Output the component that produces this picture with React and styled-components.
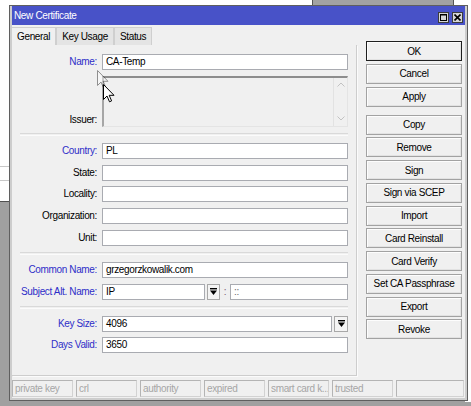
import React from 'react'
import styled, { createGlobalStyle } from 'styled-components'

const GlobalStyle = createGlobalStyle`
  html, body {
    margin: 0;
    padding: 0;
  }
  body {
    background: #a0a0a0;
    font-family: "Liberation Sans", Arial, sans-serif;
  }
`

const Desktop = styled.div`
  position: relative;
  width: 471px;
  height: 406px;
  overflow: hidden;
  background: #a0a0a0;
  font-family: "Liberation Sans", Arial, sans-serif;
  font-size: 10px;
  letter-spacing: -0.35px;
  color: #000;
`

// windows lying behind the dialog
const BackPane = styled.div`
  position: absolute;
  left: ${p => p.$x}px;
  top: ${p => p.$y}px;
  width: ${p => p.$w}px;
  height: ${p => p.$h}px;
  box-sizing: border-box;
  background: ${p => p.$bg};
  border: ${p => p.$border || 'none'};
  border-bottom: ${p => p.$bottom || p.$border || 'none'};
`

const Window = styled.div`
  position: absolute;
  left: 9px;
  top: 5px;
  width: 459px;
  height: 396px;
  box-sizing: border-box;
  border: 1px solid #5f5f5f;
  background: #cdcdcd;
  padding: 0 2px 2px;
  display: flex;
  flex-direction: column;
`

const TitleBar = styled.div`
  height: 19px;
  flex: 0 0 19px;
  display: flex;
  align-items: center;
  background: #4852c8;
  color: #fff;
  padding-left: 2px;
`

const TitleButtons = styled.div`
  margin-left: auto;
  align-self: flex-end;
  margin-bottom: 2px;
  padding-right: 2px;
  display: flex;
  gap: 3px;
`

const TitleButton = styled.div`
  width: 11px;
  height: 11px;
  box-sizing: border-box;
  border: 1px solid #3c3c3c;
  background: #d6d6d6;
  display: flex;
  align-items: center;
  justify-content: center;
`

const Body = styled.div`
  flex: 1;
  background: #f0f0f0;
  display: flex;
  flex-direction: column;
`

const MainRow = styled.div`
  flex: 1;
  display: flex;
`

const LeftCol = styled.div`
  width: 345px;
  display: flex;
  flex-direction: column;
`

const Tabs = styled.div`
  display: flex;
  margin-top: 2px;
  height: 18px;
`

const Tab = styled.div`
  padding: 0 5px;
  border: 1px solid #cfcfcf;
  border-bottom: none;
  border-left: ${p => (p.$first ? 'none' : '1px solid #cfcfcf')};
  background: ${p => (p.$active ? '#f0f0f0' : '#e4e4e4')};
  line-height: 17px;
  white-space: nowrap;
`

const Panel = styled.div`
  flex: 1;
  border-right: 1px solid #cdcdcd;
  border-bottom: 1px solid #cdcdcd;
  box-shadow: 1px 1px 0 #fbfbfb;
  padding: 9px 8px 0 0;
  display: flex;
  flex-direction: column;
  gap: 5.75px;
`

const Row = styled.div`
  display: grid;
  grid-template-columns: 85px 1fr;
  column-gap: 5px;
  align-items: ${p => (p.$bottom ? 'end' : 'center')};
`

const Label = styled.div`
  text-align: right;
  white-space: nowrap;
  color: ${p => (p.$blue ? '#2e2ec8' : '#000')};
  line-height: 14px;
`

const Field = styled.div`
  height: 16px;
  box-sizing: border-box;
  border: 1px solid #a9abb1;
  background: #fff;
  padding: 0 3px;
  line-height: 14px;
  white-space: nowrap;
  overflow: hidden;
  flex: ${p => (p.$w ? `0 0 ${p.$w}px` : '1')};
  color: ${p => (p.$muted ? '#6a6a6a' : '#000')};
`

const FieldGroup = styled.div`
  display: flex;
  align-items: center;
`

const DropButton = styled.div`
  flex: 0 0 ${p => p.$w}px;
  height: 16px;
  margin-left: 2px;
  box-sizing: border-box;
  border: 1px solid #a8a8a8;
  background: #f4f4f4;
  display: flex;
  align-items: center;
  justify-content: center;
`

const Colon = styled.div`
  flex: 0 0 10px;
  text-align: center;
  color: #7a5a70;
`

const IssuerBox = styled.div`
  height: 51px;
  box-sizing: border-box;
  border-top: 2px solid #8d8d8d;
  border-left: 2px solid #a6a6a6;
  border-right: 1px solid #e4e4e4;
  border-bottom: 1px solid #e4e4e4;
  background: #f0f0f0;
  display: flex;
  justify-content: flex-end;
`

const ScrollTrack = styled.div`
  width: 13px;
  border-left: 1px solid #e2e2e2;
  display: flex;
  flex-direction: column;
  justify-content: space-between;
  align-items: center;
  padding: 4px 0 5px;
`

const Separator = styled.div`
  height: 1px;
  margin: 0.75px 0 0.75px 8px;
  border-top: 1px solid #d9d9d9;
  border-bottom: 1px solid #fbfbfb;
`

const RightCol = styled.div`
  width: 96px;
  margin-left: 9px;
  padding-top: 16px;
  display: flex;
  flex-direction: column;
  gap: 2.75px;
`

const Button = styled.div`
  height: 20px;
  box-sizing: border-box;
  border: 1px solid ${p => (p.$default ? '#1e1e1e' : '#a2a2a2')};
  background: #f0f0f0;
  box-shadow: inset 1px 1px 0 #fdfdfd, inset -1px -1px 0 #e2e2e2;
  display: flex;
  align-items: center;
  justify-content: center;
  white-space: nowrap;
  margin-top: ${p => (p.$spaced ? '5.25px' : '0')};
`

const StatusBar = styled.div`
  display: grid;
  grid-template-columns: repeat(6, 61px) 68px;
  column-gap: 3px;
  height: 17px;
  margin: 4px 0 1px;
`

const StatusCell = styled.div`
  box-sizing: border-box;
  border: 1px solid #d2d2d2;
  border-top-color: #b4b4b4;
  border-left-color: #b4b4b4;
  color: #a6a6a6;
  padding-left: 2px;
  line-height: 15px;
  white-space: nowrap;
  overflow: hidden;
`

const Cursor = styled.svg`
  position: absolute;
  left: ${p => p.$x}px;
  top: ${p => p.$y}px;
  opacity: ${p => (p.$ghost ? 0.4 : 1)};
`

const DropIcon = () => (
  <svg width="7" height="8" viewBox="0 0 7 8">
    <rect x="0" y="0" width="7" height="1.4" fill="#000" />
    <polygon points="0,2.5 7,2.5 3.5,7" fill="#000" />
  </svg>
)

const Chevron = ({ down }) => (
  <svg width="8" height="5" viewBox="0 0 8 5">
    <polyline
      points={down ? '0.5,0.5 4,4 7.5,0.5' : '0.5,4.5 4,1 7.5,4.5'}
      fill="none"
      stroke="#c2c2c2"
      strokeWidth="1"
    />
  </svg>
)

const ArrowCursor = ({ x, y, ghost }) => (
  <Cursor $x={x} $y={y} $ghost={ghost} width="12" height="19" viewBox="0 0 12 19">
    <path
      d="M0.5 0.5 L0.5 15.5 L4 12 L6.5 17.8 L8.6 16.9 L6.2 11.3 L11 11.3 Z"
      fill="#fff"
      stroke="#000"
      strokeWidth="1"
      strokeLinejoin="miter"
    />
  </Cursor>
)

const buttons = [
  { label: 'OK', isDefault: true },
  { label: 'Cancel' },
  { label: 'Apply' },
  { label: 'Copy', spaced: true },
  { label: 'Remove' },
  { label: 'Sign' },
  { label: 'Sign via SCEP' },
  { label: 'Import' },
  { label: 'Card Reinstall' },
  { label: 'Card Verify' },
  { label: 'Set CA Passphrase' },
  { label: 'Export' },
  { label: 'Revoke' },
]

const statusFlags = ['private key', 'crl', 'authority', 'expired', 'smart card k...', 'trusted', '']

function App() {
  return (
    <Desktop>
      <GlobalStyle />
      <BackPane $x={0} $y={0} $w={471} $h={202} $bg="#fff" $bottom="1px solid #505050" />
      <BackPane $x={0} $y={166} $w={9} $h={1} $bg="#c8c8c8" />
      <BackPane $x={0} $y={180} $w={9} $h={1} $bg="#c8c8c8" />
      <BackPane $x={465} $y={0} $w={6} $h={402} $bg="#fff" />
      <BackPane $x={312} $y={-6} $w={142} $h={12} $bg="#a2a2a2" $border="1px solid #555" />

      <Window>
        <TitleBar>
          New Certificate
          <TitleButtons>
            <TitleButton>
              <svg width="7" height="7" viewBox="0 0 7 7">
                <rect x="0.5" y="0.5" width="6" height="6" fill="none" stroke="#000" />
                <rect x="0" y="0" width="7" height="1.5" fill="#000" />
              </svg>
            </TitleButton>
            <TitleButton>
              <svg width="7" height="7" viewBox="0 0 7 7">
                <path d="M0.5 0.5 L6.5 6.5 M6.5 0.5 L0.5 6.5" stroke="#000" strokeWidth="1.6" />
              </svg>
            </TitleButton>
          </TitleButtons>
        </TitleBar>

        <Body>
          <MainRow>
            <LeftCol>
              <Tabs>
                <Tab $active $first>General</Tab>
                <Tab>Key Usage</Tab>
                <Tab>Status</Tab>
              </Tabs>
              <Panel>
                <Row>
                  <Label $blue>Name:</Label>
                  <Field>CA-Temp</Field>
                </Row>
                <Row $bottom>
                  <Label>Issuer:</Label>
                  <IssuerBox>
                    <ScrollTrack>
                      <Chevron />
                      <Chevron down />
                    </ScrollTrack>
                  </IssuerBox>
                </Row>
                <Separator />
                <Row>
                  <Label $blue>Country:</Label>
                  <Field>PL</Field>
                </Row>
                <Row>
                  <Label>State:</Label>
                  <Field />
                </Row>
                <Row>
                  <Label>Locality:</Label>
                  <Field />
                </Row>
                <Row>
                  <Label>Organization:</Label>
                  <Field />
                </Row>
                <Row>
                  <Label>Unit:</Label>
                  <Field />
                </Row>
                <Separator />
                <Row>
                  <Label $blue>Common Name:</Label>
                  <Field>grzegorzkowalik.com</Field>
                </Row>
                <Row>
                  <Label $blue>Subject Alt. Name:</Label>
                  <FieldGroup>
                    <Field $w={103}>IP</Field>
                    <DropButton $w={13}>
                      <DropIcon />
                    </DropButton>
                    <Colon>:</Colon>
                    <Field $muted>::</Field>
                  </FieldGroup>
                </Row>
                <Separator />
                <Row>
                  <Label $blue>Key Size:</Label>
                  <FieldGroup>
                    <Field>4096</Field>
                    <DropButton $w={14}>
                      <DropIcon />
                    </DropButton>
                  </FieldGroup>
                </Row>
                <Row>
                  <Label $blue>Days Valid:</Label>
                  <Field>3650</Field>
                </Row>
              </Panel>
            </LeftCol>

            <RightCol>
              {buttons.map(b => (
                <Button key={b.label} $default={b.isDefault} $spaced={b.spaced}>
                  {b.label}
                </Button>
              ))}
            </RightCol>
          </MainRow>

          <StatusBar>
            {statusFlags.map((s, i) => (
              <StatusCell key={i}>{s}</StatusCell>
            ))}
          </StatusBar>
        </Body>
      </Window>

      <ArrowCursor x={97} y={70} ghost />
      <ArrowCursor x={103} y={84} />
    </Desktop>
  )
}

export default App
